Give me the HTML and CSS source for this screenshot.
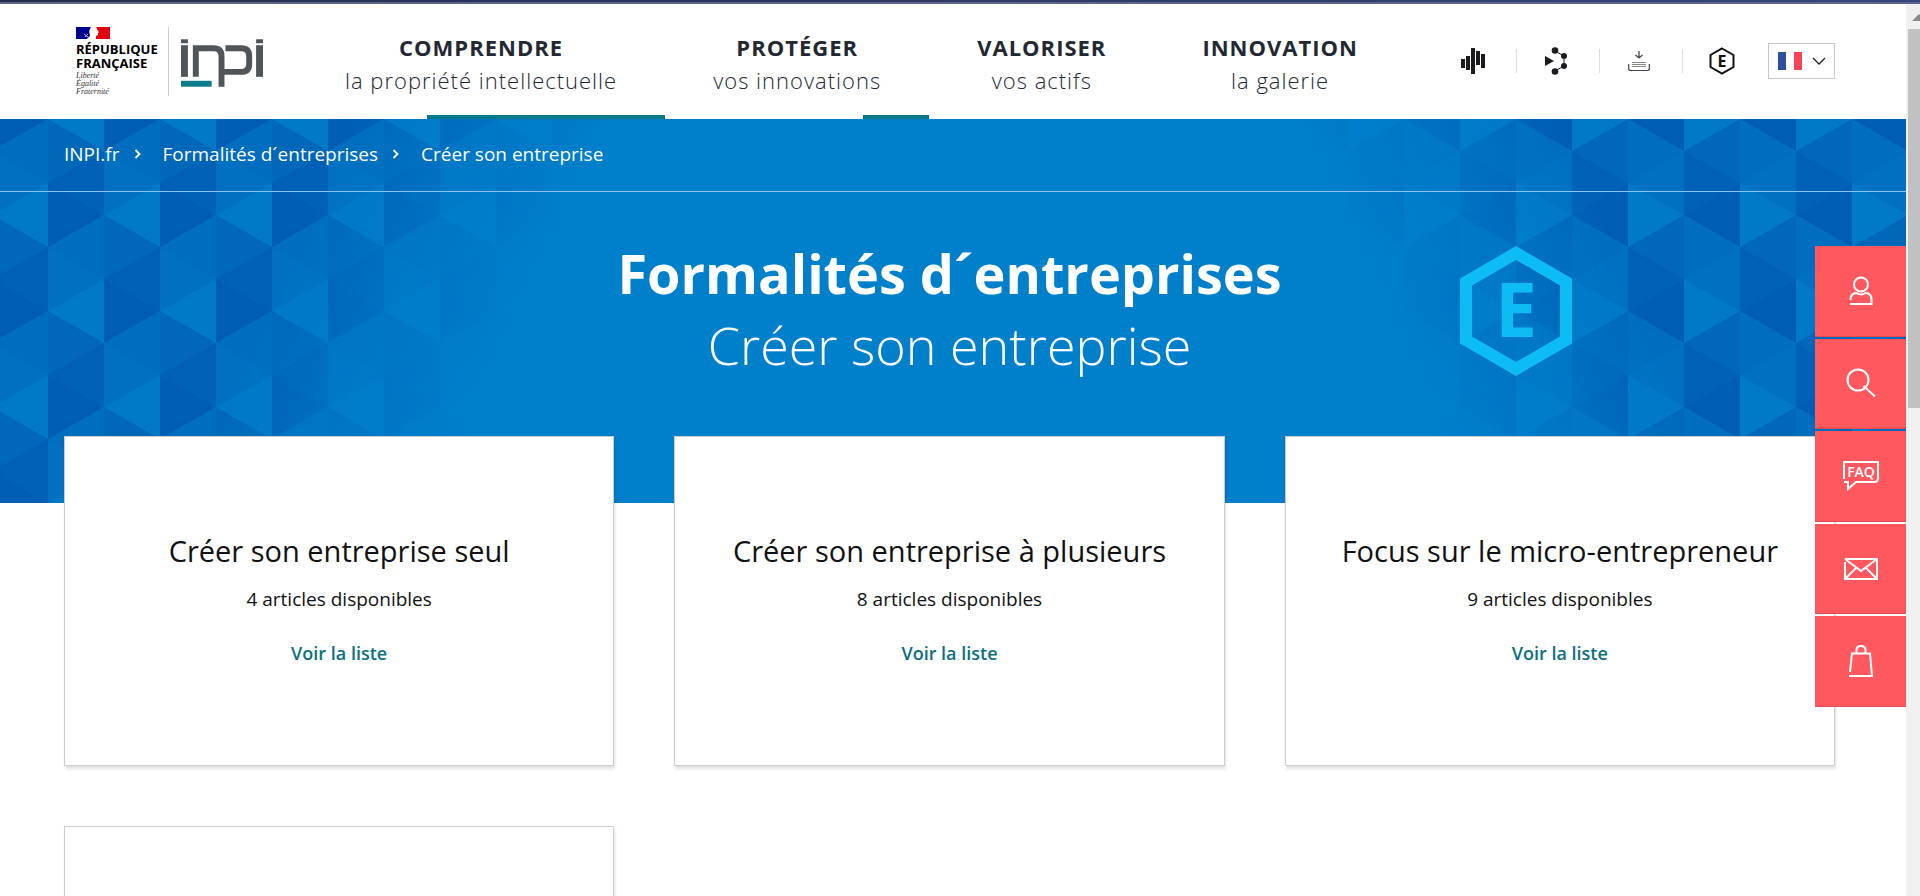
FILE: index.html
```html
<!DOCTYPE html>
<html lang="fr">
<head>
    <meta charset="UTF-8">
    <meta name="viewport" content="width=device-width, initial-scale=1.0">
    <title>Créer son entreprise | INPI.fr</title>
    <link rel="stylesheet" href="styles.css">
</head>
<body>
    <div class="top-strip"></div>
    <div class="window">
        <div class="page">
            <header class="header">
                <a class="logo" href="#" aria-label="INPI, accueil">
                    <span class="republique">
                        <svg class="marianne" width="34" height="12" viewBox="0 0 34 12" aria-hidden="true">
                            <rect width="15" height="12" fill="#000091"/>
                            <rect x="20" width="14" height="12" fill="#e1000f"/>
                            <path d="M15 0h5c1 1 1 2 2 4l1 1-1 1v2c-1 1-2 0-2 2v2H11c1-2 3-2 3-4-1-2-1-4 0-6z" fill="#fff"/>
                            <path d="M8 7l4 3M9 10l3-3" stroke="#b9b9e0" stroke-width="1"/>
                        </svg>
                        <strong>RÉPUBLIQUE<br>FRANÇAISE</strong>
                        <em>Liberté<br>Égalité<br>Fraternité</em>
                    </span>
                    <svg class="inpi" width="83" height="50" viewBox="0 0 84 50" aria-hidden="true">
                        <g fill="#4f5559">
                            <rect x="0" y="1" width="7" height="4"/>
                            <rect x="0" y="7" width="7" height="32"/>
                            <rect x="76" y="1" width="7" height="4"/>
                            <rect x="76" y="7" width="7" height="32"/>
                        </g>
                        <g fill="none" stroke="#4f5559" stroke-width="6">
                            <path d="M15 39V10H33Q41 10 41 18V49"/>
                            <path d="M45 10H61Q69 10 69 18V26Q69 34 61 34H41"/>
                        </g>
                        <rect x="0" y="43" width="31" height="6" fill="#0b7c8a"/>
                    </svg>
                </a>

                <nav class="menu">
                    <a href="#"><strong>COMPRENDRE</strong><span>la propriété intellectuelle</span></a>
                    <a href="#"><strong>PROTÉGER</strong><span>vos innovations</span></a>
                    <a href="#"><strong>VALORISER</strong><span>vos actifs</span></a>
                    <a href="#"><strong>INNOVATION</strong><span>la galerie</span></a>
                </nav>

                <div class="tools">
                    <a href="#" aria-label="Data INPI">
                        <svg width="24" height="26" viewBox="0 0 24 26" fill="#1a1a1f">
                            <rect x="0" y="11" width="4" height="9"/>
                            <rect x="5" y="8" width="4" height="14"/>
                            <rect x="10" y="0" width="4" height="26"/>
                            <rect x="15" y="3" width="4" height="14"/>
                            <rect x="20" y="6" width="4" height="14"/>
                        </svg>
                    </a>
                    <a href="#" aria-label="Procédures">
                        <svg width="24" height="28" viewBox="0 0 24 28" fill="#1a1a1f">
                            <path d="M1 9l9 5-9 5z"/>
                            <path d="M11 4l9 5v10l-9 5" fill="none" stroke="#1a1a1f"/>
                            <circle cx="11" cy="3.500" r="3.300"/>
                            <circle cx="20" cy="9" r="3"/>
                            <circle cx="20" cy="19" r="3"/>
                            <circle cx="11" cy="24.500" r="3.300"/>
                        </svg>
                    </a>
                    <a href="#" aria-label="Dépôts">
                        <svg width="22" height="22" viewBox="0 0 22 22" fill="none" stroke="#44444f">
                            <path d="M11 1v7M7.500 5L11 8l3.500-3" stroke-width="1.300"/>
                            <path d="M4 12.500h14M4 14.500h14M4 16.500h14" stroke="#888"/>
                            <path d="M.7 14v4.500q0 2 2 2h16.600q2 0 2-2V14" stroke-width="1.200"/>
                        </svg>
                    </a>
                    <a href="#" aria-label="Entreprises">
                        <svg width="26" height="28" viewBox="0 0 26 28">
                            <path d="M13 1.500L24.500 8v12L13 26.500 1.500 20V8z" fill="none" stroke="#111" stroke-width="2"/>
                            <text class="hex-letter" x="13" y="20" font-size="16" fill="#111">E</text>
                        </svg>
                    </a>
                    <button class="lang" type="button" aria-haspopup="listbox" aria-label="Langue : français">
                        <svg width="24" height="18" viewBox="0 0 24 18">
                            <rect width="8" height="18" fill="#2f50a0"/>
                            <rect x="16" width="8" height="18" fill="#f94458"/>
                        </svg>
                        <svg width="14" height="9" viewBox="0 0 14 9">
                            <path d="M1 1l6 6 6-6" fill="none" stroke="#222" stroke-width="1.300"/>
                        </svg>
                    </button>
                </div>
                <span class="marker marker-first"></span>
                <span class="marker marker-second"></span>
            </header>

            <section class="hero">
                <svg class="triangles" width="660" height="384" viewBox="0 0 660 384" aria-hidden="true">
                    <defs>
                        <pattern id="triangles" x="48" y="0" width="112" height="192" patternUnits="userSpaceOnUse">
                            <rect width="112" height="192" fill="#0067b9"/>
                            <path d="M0 64L56 32V96z" fill="#0061b6"/>
                            <path d="M0 64V128L56 96z" fill="#005db4"/>
                            <path d="M0 128L56 96V160z" fill="#006dbe"/>
                            <path d="M0 128V192L56 160z" fill="#0071c1"/>
                            <path d="M0 192L56 160V224zM0 0L56 -32V32z" fill="#0079c7"/>
                            <path d="M56 160L112 128V192z" fill="#0061b6"/>
                            <path d="M56 160V224L112 192zM56 -32V32L112 0z" fill="#005db4"/>
                            <path d="M56 32L112 0V64z" fill="#006dbe"/>
                            <path d="M56 32V96L112 64z" fill="#0071c1"/>
                            <path d="M56 96L112 64V128z" fill="#0079c7"/>
                        </pattern>
                        <linearGradient id="fade" gradientUnits="userSpaceOnUse" x1="350" y1="0" x2="565" y2="100">
                            <stop offset="0" stop-color="#fff"/>
                            <stop offset="0.500" stop-color="#fff" stop-opacity="0.400"/>
                            <stop offset="1" stop-color="#fff" stop-opacity="0"/>
                        </linearGradient>
                        <mask id="edge">
                            <rect width="660" height="384" fill="url(#fade)"/>
                        </mask>
                    </defs>
                    <rect width="660" height="384" fill="url(#triangles)" mask="url(#edge)"/>
                </svg>
                <svg class="triangles triangles-right" width="660" height="384" viewBox="0 0 660 384" aria-hidden="true">
                    <defs>
                        <pattern id="triangles-right" href="#triangles" x="54"/>
                    </defs>
                    <rect width="660" height="384" fill="url(#triangles-right)" mask="url(#edge)"/>
                </svg>

                <nav class="breadcrumb" aria-label="Fil d'Ariane">
                    <a href="#">INPI.fr</a>
                    <svg width="7" height="10" viewBox="0 0 7 10"><path d="M1.500 1l4 4-4 4" fill="none" stroke="#fff" stroke-width="1.800"/></svg>
                    <a href="#">Formalités d´entreprises</a>
                    <svg width="7" height="10" viewBox="0 0 7 10"><path d="M1.500 1l4 4-4 4" fill="none" stroke="#fff" stroke-width="1.800"/></svg>
                    <span>Créer son entreprise</span>
                </nav>

                <div class="hero-body">
                    <div class="hero-title">
                        <h1>Formalités d´entreprises</h1>
                        <p>Créer son entreprise</p>
                    </div>
                    <svg class="hexagon" width="112" height="130" viewBox="0 0 112 130" aria-hidden="true">
                        <path d="M56 7L106 36V94L56 123 6 94V36z" fill="none" stroke="#0cbcf2" stroke-width="12"/>
                        <text class="hex-letter" x="56" y="91" font-size="75" fill="#0cbcf2">E</text>
                    </svg>
                </div>
            </section>

            <main class="cards">
                <article class="card">
                    <h2>Créer son entreprise seul</h2>
                    <p>4 articles disponibles</p>
                    <a href="#">Voir la liste</a>
                </article>
                <article class="card">
                    <h2>Créer son entreprise à plusieurs</h2>
                    <p>8 articles disponibles</p>
                    <a href="#">Voir la liste</a>
                </article>
                <article class="card">
                    <h2>Focus sur le micro-entrepreneur</h2>
                    <p>9 articles disponibles</p>
                    <a href="#">Voir la liste</a>
                </article>
                <article class="card"></article>
            </main>

            <aside class="side-tools">
                <a href="#" aria-label="Mon compte">
                    <svg width="24" height="30" viewBox="0 0 24 30">
                        <circle cx="12" cy="8.500" r="7"/>
                        <path d="M1.500 24q0-7 6-7 4.500 3 9 0 6 0 6 7v4H1"/>
                    </svg>
                </a>
                <a href="#" aria-label="Rechercher">
                    <svg width="30" height="30" viewBox="0 0 30 30">
                        <circle cx="12" cy="12" r="10.500"/>
                        <path d="M17.500 18L29 28.500"/>
                    </svg>
                </a>
                <a href="#" aria-label="Questions fréquentes">
                    <svg width="36" height="30" viewBox="0 0 36 30">
                        <path d="M1 18V1H35V17Q35 21 31 21H13L5 28V21H1"/>
                        <text x="18" y="16">FAQ</text>
                    </svg>
                </a>
                <a href="#" aria-label="Contact">
                    <svg width="36" height="24" viewBox="0 0 36 24">
                        <path d="M2 2H34V22H2V5M2 2L18 14 34 2M2 22L13 11M34 22L23 11"/>
                    </svg>
                </a>
                <a href="#" aria-label="Panier">
                    <svg width="26" height="34" viewBox="0 0 26 34">
                        <path d="M2 28L4 9.500H22L24 32H1M8.500 10V6Q8.500 2 13 2T17.500 6V10"/>
                    </svg>
                </a>
            </aside>
        </div>

        <div class="scrollbar" aria-hidden="true">
            <svg width="12" height="8" viewBox="0 0 12 8"><path d="M4 7l7-7 7 7z" fill="#8a8a8a"/></svg>
            <div class="thumb"></div>
        </div>
    </div>
</body>
</html>
```
FILE: styles.css
```css
* {
    box-sizing: border-box;
}

body {
    margin: 0;
    height: 100vh;
    display: flex;
    flex-direction: column;
    overflow: hidden;
    font-family: "Open Sans", "Noto Sans", sans-serif;
    color: #111;
    background: #fff;
}

a {
    color: inherit;
    text-decoration: none;
}

h1, h2, p {
    margin: 0;
}

.top-strip {
    flex: none;
    height: 4px;
    background: linear-gradient(90deg, #242e4c, #33457a);
    border-bottom: 2px solid #5d638f;
}

.window {
    flex: 1;
    min-height: 0;
    display: flex;
}

.page {
    flex: 1;
    position: relative;
    overflow: hidden;
}

/* header */
.header {
    position: relative;
    height: 115px;
    display: flex;
    padding: 0 71px 0 76px;
}

.logo {
    display: flex;
    margin: 23px 81px 0 0;
}

.republique {
    width: 93px;
    height: 69px;
    margin-right: 12px;
    border-right: 1px solid #ccc;
    display: flex;
    flex-direction: column;
}

.marianne {
    flex: none;
}

.republique strong {
    margin-top: 3px;
    font-size: 13px;
    line-height: 14px;
    color: #000;
}

.republique em {
    margin-top: 2px;
    font-family: "Liberation Serif", serif;
    font-size: 8px;
    line-height: 8px;
    color: #333;
}

.inpi {
    margin-top: 11px;
}

.menu {
    display: flex;
    gap: 96px;
    padding-top: 27px;
}

.menu a {
    display: flex;
    flex-direction: column;
    align-items: center;
    letter-spacing: 1px;
    white-space: nowrap;
    color: #222831;
}

.menu strong {
    font-size: 22px;
    line-height: 33px;
    font-weight: 700;
}

.menu span {
    font-size: 22px;
    line-height: 33px;
    font-weight: 300;
}

.tools {
    display: flex;
    align-items: center;
    height: 36px;
    margin: 39px 0 0 auto;
}

.tools a {
    width: 83px;
    height: 24px;
    padding-right: 5px;
    display: flex;
    align-items: center;
    justify-content: center;
    border-right: 1px solid #ddd;
}

.tools a:nth-child(4) {
    border-right: none;
}

.lang {
    width: 67px;
    height: 36px;
    margin-left: 2px;
    padding: 0;
    display: flex;
    align-items: center;
    justify-content: center;
    gap: 10px;
    border: 1px solid #c8c8c8;
    background: #fff;
}

.hex-letter {
    font-weight: 700;
    text-anchor: middle;
}

.marker {
    position: absolute;
    bottom: 0;
    height: 4px;
    background: #04798a;
}

.marker-first {
    left: 427px;
    width: 238px;
}

.marker-second {
    left: 863px;
    width: 66px;
}

/* hero */
.hero {
    position: relative;
    height: 384px;
    background: #007fcb;
    color: #fff;
}

.triangles {
    position: absolute;
    top: 0;
    left: 0;
}

.triangles-right {
    left: auto;
    right: 0;
    transform: scaleX(-1);
}

.breadcrumb {
    position: relative;
    display: flex;
    align-items: center;
    height: 73px;
    padding: 0 64px 2px;
    border-bottom: 1px solid #8cc3e8;
    font-size: 19px;
}

.breadcrumb svg {
    margin: 0 22px 0 14px;
}

.hero-body {
    position: relative;
    display: grid;
    grid-template-columns: 1fr auto 1fr;
    padding: 45px 71px 0 64px;
}

.hero-title {
    grid-column: 2;
    text-align: center;
    line-height: 72px;
}

.hero-title h1 {
    font-size: 54px;
    font-weight: 700;
}

.hero-title p {
    font-size: 52px;
    font-weight: 300;
}

.hexagon {
    margin: 9px 0 0 178px;
}

/* cards */
.cards {
    position: relative;
    display: grid;
    grid-template-columns: repeat(3, 1fr);
    gap: 60px;
    margin-top: -67px;
    padding: 0 71px 60px 64px;
}

.card {
    min-height: 330px;
    padding: 94px 20px;
    display: flex;
    flex-direction: column;
    align-items: center;
    background: #fff;
    border: 1px solid #ccc;
    box-shadow: 1px 3px 3px rgba(0, 0, 0, 0.12);
}

.card h2 {
    font-size: 29px;
    line-height: 40px;
    font-weight: 400;
    white-space: nowrap;
}

.card p {
    margin-top: 16px;
    font-size: 19px;
    line-height: 24px;
}

.card a {
    margin-top: 30px;
    font-size: 18px;
    line-height: 24px;
    font-weight: 600;
    color: #0b6f7f;
}

/* floating shortcuts */
.side-tools {
    position: absolute;
    top: 242px;
    right: 0;
    width: 91px;
    height: 461px;
    display: grid;
    grid-template-rows: repeat(5, 1fr);
    gap: 2px;
}

.side-tools a {
    display: flex;
    align-items: center;
    justify-content: center;
    background: #ff595f;
    border-bottom: 1px solid #e04a55;
}

.side-tools svg {
    fill: none;
    stroke: #fff;
    stroke-width: 2;
}

.side-tools text {
    font-size: 14px;
    font-weight: 600;
    fill: #fff;
    stroke: none;
    text-anchor: middle;
}

/* window scrollbar */
.scrollbar {
    flex: none;
    width: 14px;
    padding: 10px 0 0 2px;
    background: #f0f0f0;
}

.scrollbar svg {
    display: block;
}

.thumb {
    height: 379px;
    margin-top: 7px;
    background: #c1c1c1;
}
```
